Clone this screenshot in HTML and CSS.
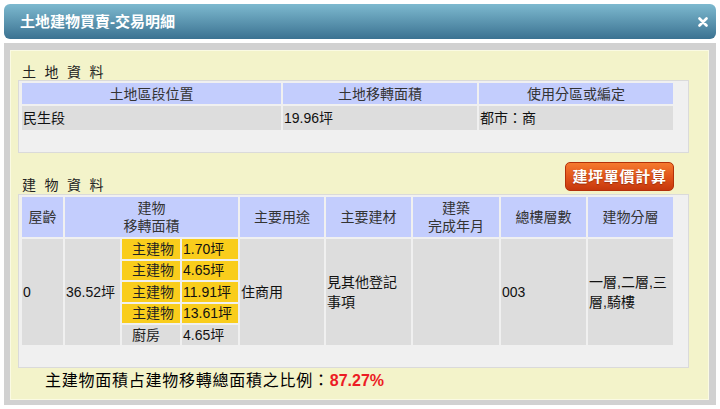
FILE: index.html
```html
<!DOCTYPE html>
<html lang="zh-Hant">
<head>
<meta charset="utf-8">
<title>土地建物買賣-交易明細</title>
<link rel="stylesheet" href="styles.css">
</head>
<body>
<div class="dialog">
  <div class="titlebar">
    <span class="title">土地建物買賣-交易明細</span>
    <span class="close" aria-label="close"><svg width="10" height="10" viewBox="0 0 10 10"><path d="M1.5 1.5 L8.5 8.5 M8.5 1.5 L1.5 8.5" stroke="#fff" stroke-width="2.6" stroke-linecap="round" fill="none"/></svg></span>
  </div>
  <div class="frame">
    <div class="panel">
      <div class="section-title land-title">土 地 資 料</div>
      <div class="box">
        <table class="grid">
          <colgroup><col class="w259"><col class="w194"><col class="w194"></colgroup>
          <tr class="land-head"><th>土地區段位置</th><th>土地移轉面積</th><th>使用分區或編定</th></tr>
          <tr class="land-row"><td>民生段</td><td>19.96坪</td><td>都市：商</td></tr>
        </table>
      </div>
      <div class="bar">
        <div class="section-title bar-title">建 物 資 料</div>
        <button class="calc" type="button">建坪單價計算</button>
      </div>
      <div class="box">
        <table class="grid">
          <colgroup>
            <col class="w41"><col class="w55"><col class="w58"><col class="w56"><col class="w84"><col class="w85"><col class="w86"><col class="w85"><col class="w85">
          </colgroup>
          <tr class="bld-head">
            <th>屋齡</th><th colspan="3">建物<br>移轉面積</th><th>主要用途</th><th>主要建材</th><th>建築<br>完成年月</th><th>總樓層數</th><th>建物分層</th>
          </tr>
          <tr class="h20">
            <td rowspan="5">0</td>
            <td rowspan="5">36.52坪</td>
            <td class="sub label y">主建物</td><td class="sub y">1.70坪</td>
            <td rowspan="5">住商用</td>
            <td rowspan="5" class="wrap">見其他登記事項</td>
            <td rowspan="5"></td>
            <td rowspan="5">003</td>
            <td rowspan="5" class="wrap">一層,二層,三層,騎樓</td>
          </tr>
          <tr class="h19"><td class="sub label y">主建物</td><td class="sub y">4.65坪</td></tr>
          <tr class="h20"><td class="sub label y">主建物</td><td class="sub y">11.91坪</td></tr>
          <tr class="h19"><td class="sub label y">主建物</td><td class="sub y">13.61坪</td></tr>
          <tr class="h20"><td class="sub label">廚房</td><td class="sub">4.65坪</td></tr>
        </table>
      </div>
      <div class="summary"><span class="summary-label">主建物面積占建物移轉總面積之比例：</span><span class="ratio">87.27%</span></div>
    </div>
  </div>
</div>
</body>
</html>
```
FILE: styles.css
```css
body {
  margin: 0;
  background: #ffffff;
  font-family: "Liberation Sans", "Noto Sans CJK TC", sans-serif;
  font-size: 14px;
  color: #1a1a1a;
}

.dialog {
  width: 712px;
  margin: 4px 0 0 4px;
}

.titlebar {
  height: 35px;
  box-sizing: border-box;
  border-radius: 6px;
  background: linear-gradient(#7db9cf, #3b7291);
  display: flex;
  align-items: center;
  justify-content: space-between;
  padding: 0 8px 0 16px;
}

.title {
  color: #ffffff;
  font-weight: bold;
  font-size: 15px;
  line-height: 18px;
}

.close {
  display: flex;
  width: 10px;
  height: 10px;
}

.frame {
  margin-top: 4px;
  height: 362px;
  box-sizing: border-box;
  background: #d1d1d1;
  padding: 7px 7px 5px 6px;
}

.panel {
  height: 350px;
  box-sizing: border-box;
  background: #f3f3ca;
  border: 1px solid #fafae3;
}

.section-title {
  font-size: 14px;
  line-height: 16px;
  letter-spacing: 2.3px;
  color: #222;
}

.land-title {
  margin: 13px 0 0 11px;
}

.box {
  margin-left: 7px;
  width: 671px;
  box-sizing: border-box;
  border: 1px solid #dadada;
  background: #f0f0f0;
  padding: 0 0 20px 1px;
}

.grid {
  table-layout: fixed;
  width: 655px;
  border-collapse: separate;
  border-spacing: 2px;
}

.w41 { width: 41px; }
.w55 { width: 55px; }
.w56 { width: 56px; }
.w58 { width: 58px; }
.w84 { width: 84px; }
.w85 { width: 85px; }
.w86 { width: 86px; }
.w194 { width: 194px; }
.w259 { width: 259px; }

.grid th {
  background: #c3cdfd;
  color: #333;
  font-weight: normal;
  text-align: center;
  vertical-align: middle;
  padding: 0;
  line-height: 18px;
}

.grid td {
  background: #dddddd;
  color: #111;
  text-align: left;
  vertical-align: middle;
  padding: 0 2px 0 1px;
  line-height: 20px;
}

.land-head th { height: 21px; }
.land-row td { height: 24px; }

.bld-head th { height: 40px; }
.h20 td.sub { height: 20px; }
.h19 td.sub { height: 19px; }

.grid td.sub {
  line-height: 19px;
  white-space: nowrap;
}

.grid td.label {
  padding-left: 10px;
  color: #222;
}

.grid td.y {
  background: #f9cd1c;
}

.wrap {
  word-break: break-all;
}

.bar {
  margin: 9px 0 3px 7px;
  width: 671px;
  height: 29px;
  box-sizing: border-box;
  padding-left: 4px;
  display: flex;
  justify-content: space-between;
  align-items: flex-end;
}

.bar-title {
  margin-bottom: -2px;
}

.calc {
  width: 109px;
  height: 29px;
  margin: 0 15px 0 0;
  padding: 0;
  box-sizing: border-box;
  border: 1px solid #b3300a;
  border-radius: 5px;
  background: linear-gradient(#f57a2e, #e0521a 55%, #c6380c);
  color: #ffffff;
  font-family: "Liberation Sans", "Noto Sans CJK TC", sans-serif;
  font-size: 15px;
  font-weight: bold;
  letter-spacing: 0.7px;
  line-height: 27px;
  text-shadow: 0 1px 1px rgba(90, 20, 0, 0.45);
}

.summary {
  margin: 3px 0 0 34px;
  font-size: 16px;
  line-height: 20px;
  color: #000;
}

.summary-label {
  letter-spacing: 0.75px;
}

.ratio {
  color: #ec1c24;
  font-weight: bold;
}
```
